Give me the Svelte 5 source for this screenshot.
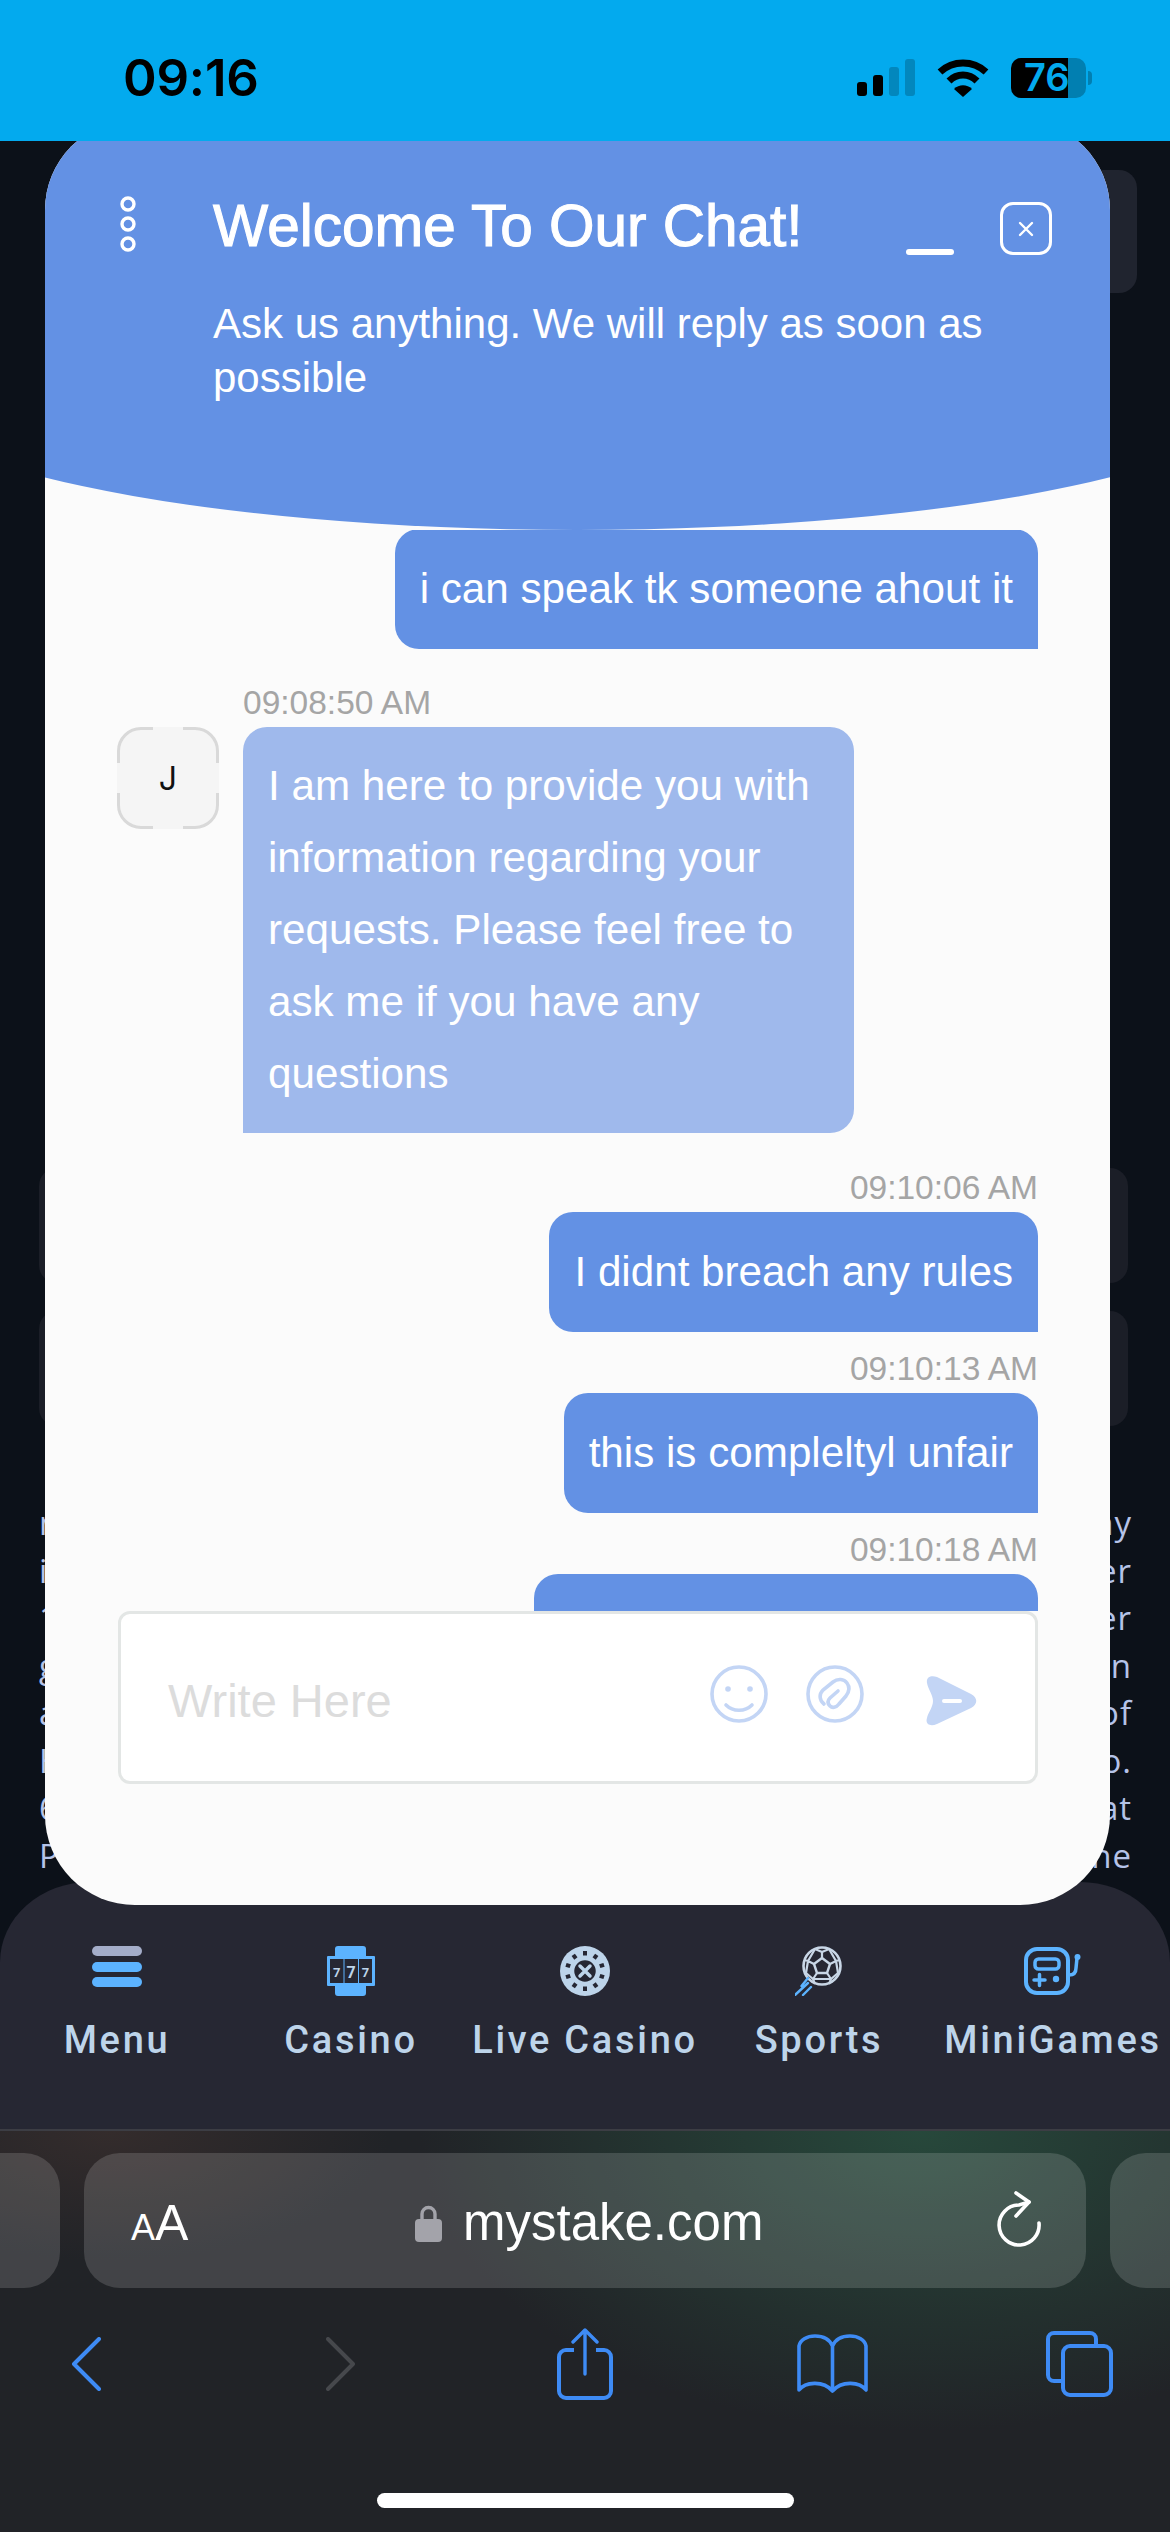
<script lang="ts">
  const pageLines = [
    ['m', 'ny'],
    ['i', 'er'],
    ['1', 'er'],
    ['g', 'n'],
    ['a', 'of'],
    ['H', 'o.'],
    ['6', 'at'],
    ['P', 'ne'],
    ['\'', '']
  ];

  const reply = 'I am here to provide you with information regarding your requests. Please feel free to ask me if you have any questions';

  const outgoing = [
    { time: '09:10:06 AM', text: 'I didnt breach any rules' },
    { time: '09:10:13 AM', text: 'this is compleltyl unfair' }
  ];

  const wheelDots = Array.from({ length: 10 }, (_, i) => (i * 360) / 10);
</script>

<div class="page">
  <header class="status">
    <span class="clock">09:16</span>
    <div class="status-icons">
      <div class="signal">
        <i class="b1"></i><i class="b2"></i><i class="b3 off"></i><i class="b4 off"></i>
      </div>
      <svg class="wifi" viewBox="0 0 52 38" width="52" height="38" aria-hidden="true">
        <path d="M3 13 C16 1 36 1 49 13" fill="none" stroke="#000" stroke-width="7" />
        <path d="M12 22 C20 14 32 14 40 22" fill="none" stroke="#000" stroke-width="7" />
        <path d="M26 38 L17 30 C22 25 30 25 35 30 Z" fill="#000" />
      </svg>
      <div class="battery">
        <div class="cell"><span>76</span></div>
        <i class="nub"></i>
      </div>
    </div>
  </header>

  <main class="site">
    <div class="card first"></div>
    <div class="card second"></div>
    <div class="card third"></div>
    <div class="legal">
      {#each pageLines as line}
        <div class="legal-line"><span>{line[0]}</span><span>{line[1]}</span></div>
      {/each}
    </div>
  </main>

  <nav class="tabs">
    <a class="tab">
      <svg viewBox="0 0 50 42" width="50" height="42" class="icon-menu" aria-hidden="true">
        <rect x="0" y="0" width="50" height="10" rx="5" fill="#a4adc9" />
        <rect x="0" y="16" width="50" height="10" rx="5" fill="#5cb3ff" />
        <rect x="0" y="31" width="50" height="10" rx="5" fill="#5cb3ff" />
      </svg>
      <span>Menu</span>
    </a>
    <a class="tab">
      <svg viewBox="0 0 48 50" width="48" height="50" aria-hidden="true">
        <path d="M8 3 a3 3 0 0 1 3 -3 h25 a3 3 0 0 1 3 3 v7 h8 a1 1 0 0 1 1 1 v28 a1 1 0 0 1 -1 1 h-8 v7 a3 3 0 0 1 -3 3 h-25 a3 3 0 0 1 -3 -3 v-7 h-7 a1 1 0 0 1 -1 -1 v-28 a1 1 0 0 1 1 -1 h7 z" fill="#5cb3ff" />
        <rect x="3" y="13" width="13.5" height="24" fill="#262733" />
        <rect x="17.5" y="13" width="13.5" height="24" fill="#262733" />
        <rect x="32" y="13" width="13" height="24" fill="#262733" />
        <text x="9.7" y="31" class="seven">7</text>
        <text x="24.2" y="32" class="seven big">7</text>
        <text x="38.5" y="31" class="seven">7</text>
      </svg>
      <span>Casino</span>
    </a>
    <a class="tab">
      <svg viewBox="0 0 50 50" width="50" height="50" aria-hidden="true">
        <circle cx="25" cy="25" r="25" fill="#bdd4ea" />
        {#each wheelDots as angle}
          <rect x="23" y="5" width="4" height="4.5" fill="#262733" transform="rotate({angle} 25 25)" />
        {/each}
        <circle cx="25" cy="25" r="12.5" fill="#262733" stroke="#bdd4ea" stroke-width="3.5" />
        <path d="M20 20 L30 30 M30 20 L20 30" stroke="#bdd4ea" stroke-width="3.5" stroke-linecap="round" />
      </svg>
      <span>Live Casino</span>
    </a>
    <a class="tab">
      <svg viewBox="0 0 48 50" width="48" height="50" aria-hidden="true">
        <circle cx="27" cy="20" r="18.5" fill="none" stroke="#c8d6e6" stroke-width="2.6" />
        <path d="M27 12 L35 18 L32 27 L22 27 L19 18 Z" fill="none" stroke="#c8d6e6" stroke-width="2.4" stroke-linejoin="round" />
        <path d="M27 12 V6 M35 18 L41 15 M32 27 L36 33 M22 27 L18 33" fill="none" stroke="#c8d6e6" stroke-width="2.2" />
        <path d="M19 18 L13 15 M20 3 L27 6 L34 3 L41 15 L45 14 M9 14 L13 15 L20 3 M13 15 L11 27 L18 33 L20 38 M41 15 L43 27 L36 33 L34 38 M18 33 L36 33" fill="none" stroke="#c8d6e6" stroke-width="2.2" stroke-linejoin="round" />
        <path d="M6.5 40 L13 32 M0 49 L13 37 M8 49 L16 41" stroke="#5cb3ff" stroke-width="2.4" stroke-linecap="round" />
      </svg>
      <span>Sports</span>
    </a>
    <a class="tab">
      <svg viewBox="0 0 58 50" width="58" height="50" aria-hidden="true">
        <rect x="2" y="3" width="42" height="44" rx="11" fill="none" stroke="#5cb3ff" stroke-width="4" />
        <rect x="11" y="13" width="24" height="10" rx="3.5" fill="none" stroke="#5cb3ff" stroke-width="3.5" />
        <path d="M10 34 H21 M15.5 28.5 V39.5" stroke="#5cb3ff" stroke-width="3.5" stroke-linecap="round" />
        <circle cx="32" cy="33" r="3.2" fill="#5cb3ff" />
        <path d="M45 29 C50 29 52 26 52 22 L53 12" fill="none" stroke="#5cb3ff" stroke-width="3.5" />
        <circle cx="53.5" cy="11" r="3" fill="#5cb3ff" />
      </svg>
      <span>MiniGames</span>
    </a>
  </nav>

  <section class="safari">
    <div class="url-row">
      <div class="side left"></div>
      <div class="url">
        <span class="reader"><small>A</small>A</span>
        <div class="address">
          <svg viewBox="0 0 27 38" width="27" height="38" aria-hidden="true">
            <path d="M7 17 V10 a6.5 6.5 0 0 1 13 0 V17" fill="none" stroke="#a3a3aa" stroke-width="3.4" />
            <rect x="0" y="15" width="27" height="23" rx="4" fill="#a3a3aa" />
          </svg>
          <span>mystake.com</span>
        </div>
        <svg class="reload" viewBox="0 0 46 56" width="46" height="56" aria-hidden="true">
          <path d="M43 32 A20 20 0 1 1 23 14 L33 11" fill="none" stroke="#fff" stroke-width="3.6" stroke-linecap="round" />
          <path d="M20 2 L33 11 L20 25" fill="none" stroke="#fff" stroke-width="3.6" stroke-linecap="round" stroke-linejoin="round" />
        </svg>
      </div>
      <div class="side right"></div>
    </div>

    <div class="toolbar">
      <svg viewBox="0 0 30 54" width="30" height="54" aria-hidden="true">
        <path d="M28 2 L3 27 L28 52" fill="none" stroke="#3e8bf5" stroke-width="4" stroke-linecap="round" stroke-linejoin="round" />
      </svg>
      <svg viewBox="0 0 30 54" width="30" height="54" aria-hidden="true">
        <path d="M2 2 L27 27 L2 52" fill="none" stroke="#46484c" stroke-width="4" stroke-linecap="round" stroke-linejoin="round" />
      </svg>
      <svg viewBox="0 0 56 72" width="56" height="72" aria-hidden="true">
        <path d="M17 22 H9 a7 7 0 0 0 -7 7 V63 a7 7 0 0 0 7 7 H47 a7 7 0 0 0 7 -7 V29 a7 7 0 0 0 -7 -7 H39" fill="none" stroke="#3e8bf5" stroke-width="4" />
        <path d="M28 46 V2 M16 14 L28 2 L40 14" fill="none" stroke="#3e8bf5" stroke-width="3.4" stroke-linecap="round" stroke-linejoin="round" />
      </svg>
      <svg viewBox="0 0 71 60" width="71" height="60" aria-hidden="true">
        <path d="M35.5 12 C32 4 26 2 18 2 C10 2 3 6 2 12 V56 C8 48 26 46 35.5 57 C45 46 63 48 69 56 V12 C68 6 61 2 53 2 C45 2 39 4 35.5 12 Z M35.5 12 V56" fill="none" stroke="#3e8bf5" stroke-width="3.6" stroke-linejoin="round" />
      </svg>
      <svg viewBox="0 0 67 66" width="67" height="66" aria-hidden="true">
        <path d="M50 13 V8 a6 6 0 0 0 -6 -6 H8 a6 6 0 0 0 -6 6 V44 a6 6 0 0 0 6 6 H16" fill="none" stroke="#3e8bf5" stroke-width="4" />
        <rect x="17" y="15" width="48" height="49" rx="7" fill="none" stroke="#3e8bf5" stroke-width="4" />
      </svg>
    </div>

    <div class="home-indicator"></div>
  </section>

  <aside class="chat">
    <div class="chat-head">
      <svg class="dots" viewBox="0 0 18 58" width="18" height="58" aria-hidden="true">
        <circle cx="9" cy="9" r="6" /><circle cx="9" cy="29" r="6" /><circle cx="9" cy="49" r="6" />
      </svg>
      <div class="head-copy">
        <h2>Welcome To Our Chat!</h2>
        <p>Ask us anything. We will reply as soon as possible</p>
      </div>
      <div class="head-actions">
        <i class="minimize"></i>
        <button type="button" class="close" aria-label="Close">
          <svg viewBox="0 0 18 18" width="18" height="18" aria-hidden="true">
            <path d="M3 3 L15 15 M15 3 L3 15" stroke="#fff" stroke-width="2.4" stroke-linecap="round" />
          </svg>
        </button>
      </div>
    </div>

    <div class="messages">
      <div class="msg mine">
        <div class="bubble">i can speak tk someone ahout it</div>
      </div>

      <div class="msg theirs">
        <time>09:08:50 AM</time>
        <div class="avatar"><b>J</b></div>
        <div class="bubble">{reply}</div>
      </div>

      {#each outgoing as item, index (item.time)}
        <div class="msg mine" class:switch={index === 0}>
          <time>{item.time}</time>
          <div class="bubble">{item.text}</div>
        </div>
      {/each}

      <div class="msg mine">
        <time>09:10:18 AM</time>
        <div class="bubble cut"></div>
      </div>
    </div>

    <div class="composer">
      <span class="placeholder">Write Here</span>
      <div class="composer-icons">
        <svg viewBox="0 0 58 58" width="58" height="58" aria-hidden="true">
          <circle cx="29" cy="29" r="27" fill="none" stroke="#c3d5f5" stroke-width="3.6" />
          <circle cx="18" cy="24" r="2.8" fill="#c3d5f5" />
          <circle cx="40" cy="24" r="2.8" fill="#c3d5f5" />
          <path d="M16 40 C23 47 35 47 42 40" fill="none" stroke="#c3d5f5" stroke-width="3.6" stroke-linecap="round" />
        </svg>
        <svg viewBox="0 0 58 58" width="58" height="58" aria-hidden="true">
          <circle cx="29" cy="29" r="27" fill="none" stroke="#c3d5f5" stroke-width="3.6" />
          <path d="M18 39 C13 35 13 29 17 25 L27 17 C32 13 38 14 41 18 C44 22 43 27 40 31 L33 39 C30 43 26 43 24 41 C21 38 22 35 24 33 L32 26" fill="none" stroke="#c3d5f5" stroke-width="3.6" stroke-linecap="round" />
        </svg>
        <svg class="send" viewBox="0 0 52 52" width="52" height="52" aria-hidden="true">
          <path d="M2 8 C1 2 6 0 12 2 L46 19 C53 23 53 29 46 33 L12 49 C5 52 0 49 2 43 C3 38 8 32 8 26 C8 20 3 14 2 8 Z" fill="#c3d5f5" />
          <path d="M19 26 H35" stroke="#fff" stroke-width="4" stroke-linecap="round" />
        </svg>
      </div>
    </div>
  </aside>
</div>

<style>
  :global(body) {
    margin: 0;
    background: #0c1119;
  }

  .page {
    position: relative;
    display: flex;
    flex-direction: column;
    width: 1170px;
    height: 2532px;
    overflow: hidden;
    background: #0c1119;
    font-family: 'Liberation Sans', Arial, sans-serif;
  }

  .status {
    position: relative;
    z-index: 3;
    display: flex;
    flex: none;
    justify-content: space-between;
    align-items: center;
    height: 141px;
    padding: 14px 78px 0 123px;
    box-sizing: border-box;
    background: #03aaee;
  }

  .clock {
    color: #000;
    font-family: Inter, sans-serif;
    font-size: 51px;
    font-weight: 600;
    letter-spacing: -0.2px;
  }

  .status-icons {
    display: flex;
    align-items: center;
  }

  .signal {
    display: flex;
    align-items: flex-end;
    gap: 6px;
    height: 37px;
    margin-right: 22px;
  }

  .signal i {
    display: block;
    width: 10px;
    border-radius: 3px;
    background: #000;
  }

  .signal .off {
    background: #0287bd;
  }

  .b1 { height: 14px; }
  .b2 { height: 21px; }
  .b3 { height: 29px; }
  .b4 { height: 37px; }

  .wifi {
    margin-right: 22px;
  }

  .battery {
    display: flex;
    align-items: center;
    gap: 2px;
  }

  .cell {
    width: 75px;
    height: 40px;
    border-radius: 10px;
    background: linear-gradient(90deg, #000 76%, #017fb1 76%);
    color: #03aaee;
    font-family: Inter, sans-serif;
    font-size: 38px;
    font-weight: 600;
    line-height: 40px;
    text-indent: 13px;
  }

  .cell span {
    position: relative;
    top: -1px;
  }

  .nub {
    display: block;
    width: 4px;
    height: 14px;
    border-radius: 0 7px 7px 0;
    background: #017fb1;
  }

  .site {
    flex: 1;
    min-height: 0;
    overflow: hidden;
    padding: 0 38px 0 39px;
  }

  .card {
    height: 115px;
    margin-right: 4px;
    border-radius: 18px;
    background: #1b1e27;
  }

  .first {
    height: 123px;
    margin: 29px -5px 0 300px;
    background: #20242f;
  }

  .second {
    margin-top: 875px;
  }

  .third {
    margin-top: 28px;
  }

  .legal {
    margin-top: 73px;
    color: #b5c3e8;
    font-family: 'Open Sans', sans-serif;
    font-size: 33px;
    letter-spacing: 1px;
    line-height: 47.5px;
  }

  .legal-line {
    display: flex;
    justify-content: space-between;
  }

  .tabs {
    display: grid;
    flex: none;
    grid-template-columns: repeat(5, 1fr);
    height: 247px;
    padding-top: 64px;
    box-sizing: border-box;
    border-radius: 90px 90px 0 0 / 80px 80px 0 0;
    background: #262733;
  }

  .tab {
    display: flex;
    flex-direction: column;
    align-items: center;
    color: #bdd4ea;
    font-family: Roboto, sans-serif;
    font-size: 38px;
    font-weight: 500;
    letter-spacing: 2.7px;
    white-space: nowrap;
  }

  .tab svg {
    flex: none;
    height: 50px;
  }

  .tab .icon-menu {
    height: 42px;
    margin-bottom: 8px;
  }

  .tab span {
    margin-top: 23px;
    line-height: 42px;
  }

  .seven {
    fill: #bdd4ea;
    font-family: Roboto, sans-serif;
    font-size: 13px;
    font-weight: 700;
    letter-spacing: 0;
    text-anchor: middle;
  }

  .seven.big {
    font-size: 16px;
  }

  .safari {
    display: flex;
    flex: none;
    flex-direction: column;
    height: 403px;
    box-sizing: border-box;
    border-top: 2px solid #3c3d44;
    background:
      radial-gradient(ellipse 500px 300px at 920px 0, #27483b, rgba(39, 72, 59, 0) 100%),
      radial-gradient(ellipse 280px 130px at 110px 0, #342c2c, rgba(52, 44, 44, 0) 100%),
      #212327;
  }

  .url-row {
    display: grid;
    grid-template-columns: 60px 1002px 1fr;
    gap: 24px;
    height: 135px;
    margin-top: 22px;
  }

  .side {
    background: rgba(255, 255, 255, 0.15);
  }

  .side.left {
    border-radius: 0 36px 36px 0;
  }

  .side.right {
    border-radius: 36px 0 0 36px;
  }

  .url {
    display: flex;
    justify-content: space-between;
    align-items: center;
    padding: 4px 44px 0 47px;
    border-radius: 36px;
    background: rgba(255, 255, 255, 0.15);
    color: #fff;
  }

  .reader {
    font-size: 50px;
    line-height: 1;
  }

  .reader small {
    font-size: 36px;
  }

  .address {
    display: flex;
    align-items: center;
    gap: 21px;
    margin-left: -6px;
    font-size: 51px;
    line-height: 1;
  }

  .reload {
    margin-top: -8px;
  }

  .toolbar {
    display: grid;
    grid-template-columns: 255px 231px 240px 249px auto;
    align-items: center;
    height: 72px;
    padding-left: 71px;
    margin-top: 40px;
  }

  .home-indicator {
    width: 417px;
    height: 15px;
    margin: 93px auto 0;
    border-radius: 8px;
    background: #fff;
  }

  .chat {
    position: absolute;
    z-index: 2;
    top: 120px;
    left: 45px;
    display: flex;
    flex-direction: column;
    width: 1065px;
    height: 1785px;
    overflow: hidden;
    border-radius: 90px;
    background: #fbfbfb;
  }

  .chat-head {
    position: relative;
    z-index: 1;
    display: flex;
    flex: none;
    align-items: flex-start;
    height: 410px;
    padding: 73px 56px 0 74px;
    box-sizing: border-box;
    color: #fff;
  }

  .chat-head::before {
    content: '';
    position: absolute;
    z-index: -1;
    bottom: 0;
    left: -168px;
    width: 1400px;
    height: 700px;
    border-radius: 0 0 700px 700px / 0 0 150px 150px;
    background: #6391e4;
  }

  .dots {
    flex: none;
    margin-top: 2px;
  }

  .dots circle {
    fill: none;
    stroke: #fff;
    stroke-width: 3.4;
  }

  .head-copy {
    flex: none;
    width: 790px;
    margin-left: 76px;
  }

  h2 {
    margin: 0;
    font-size: 58.5px;
    font-weight: 400;
    line-height: 66px;
    -webkit-text-stroke: 1.1px #fff;
  }

  p {
    margin: 38px 0 0;
    font-size: 42px;
    line-height: 54px;
  }

  .head-actions {
    position: absolute;
    top: 82px;
    right: 58px;
    display: flex;
    align-items: flex-end;
    gap: 46px;
  }

  .minimize {
    display: block;
    width: 48px;
    height: 6px;
    border-radius: 3px;
    background: #fff;
  }

  .close {
    display: flex;
    justify-content: center;
    align-items: center;
    width: 52px;
    height: 53px;
    padding: 0;
    border: 3px solid #fff;
    border-radius: 13px;
    background: none;
  }

  .messages {
    display: flex;
    flex: 1;
    flex-direction: column;
    min-height: 0;
    overflow: hidden;
    padding: 1px 72px 0 72px;
  }

  .msg {
    display: flex;
    flex: none;
    flex-direction: column;
    align-items: flex-end;
    margin-top: 19px;
  }

  .msg:first-child {
    margin-top: -2px;
  }

  .msg.switch {
    margin-top: 37px;
  }

  time {
    margin-bottom: 6px;
    color: #a5a5a5;
    font-size: 33.5px;
    line-height: 36px;
  }

  .bubble {
    padding: 24px 25px;
    border-radius: 24px 24px 0 24px;
    background: #6391e4;
    color: #fff;
    font-size: 42.2px;
    line-height: 72px;
    white-space: nowrap;
  }

  .bubble.cut {
    flex: none;
    width: 504px;
    height: 118px;
    padding: 0;
  }

  .theirs {
    display: grid;
    grid-template-columns: 102px 611px;
    column-gap: 24px;
    justify-content: start;
    align-items: start;
    margin-top: 36px;
  }

  .theirs time {
    grid-column: 2;
  }

  .theirs .bubble {
    grid-column: 2;
    box-sizing: border-box;
    padding: 23px 25px;
    border-radius: 24px 24px 24px 0;
    background: #9fb9ec;
    white-space: normal;
  }

  .avatar {
    position: relative;
    grid-row: 2;
    grid-column: 1;
    display: flex;
    justify-content: center;
    align-items: center;
    height: 102px;
    box-sizing: border-box;
    border: 3px solid #d9d9d9;
    border-radius: 24px;
    background: #f5f5f5;
    color: #111;
    font-family: Inter, sans-serif;
    font-size: 32px;
  }

  .avatar b {
    position: relative;
    z-index: 1;
    font-weight: 400;
  }

  /* the ring is only visible at the corners */
  .avatar::before,
  .avatar::after {
    content: '';
    position: absolute;
    background: #f5f5f5;
  }

  .avatar::before {
    inset: 33px -3px;
  }

  .avatar::after {
    inset: -3px 33px;
  }

  .composer {
    display: flex;
    flex: none;
    justify-content: space-between;
    align-items: center;
    height: 173px;
    margin: 0 72px 121px 73px;
    padding: 0 58px 8px 47px;
    box-sizing: border-box;
    border: 3px solid #e3e6e5;
    border-radius: 12px;
    background: #fff;
  }

  .placeholder {
    margin-top: 14px;
    color: #dcdcdc;
    font-size: 47px;
  }

  .composer-icons {
    display: flex;
    align-items: center;
    gap: 38px;
  }

  .send {
    margin: 14px 0 0 23px;
  }
</style>
